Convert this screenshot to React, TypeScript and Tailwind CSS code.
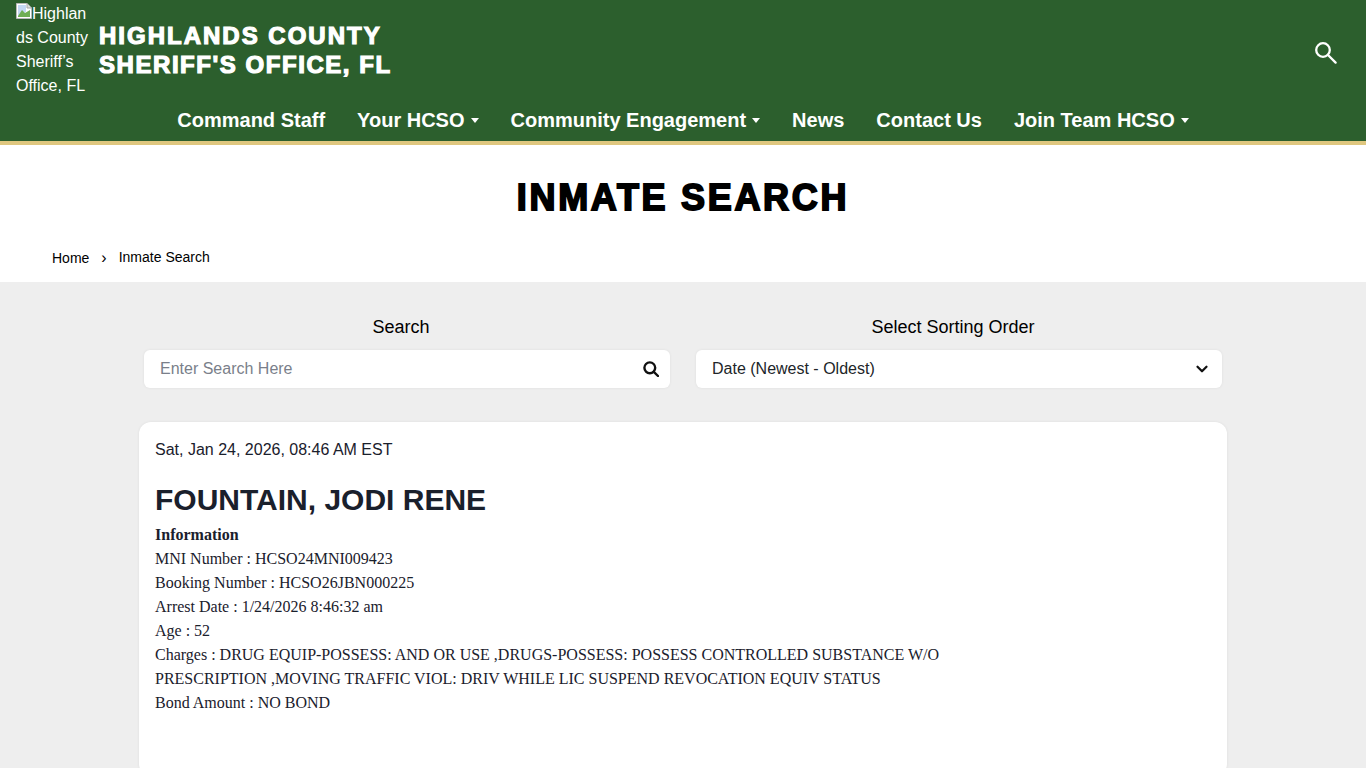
import { ChevronDown } from "lucide-react";

const sans = "font-['Liberation_Sans',Arial,sans-serif]";

const navItems = [
  { name: "Command Staff", caret: false },
  { name: "Your HCSO", caret: true },
  { name: "Community Engagement", caret: true },
  { name: "News", caret: false },
  { name: "Contact Us", caret: false },
  { name: "Join Team HCSO", caret: true },
];

const BrokenImage = () => (
  <svg width="16" height="16" viewBox="0 0 16 16" className="inline-block align-top mt-[1px]">
    <path d="M0.5 0.5H11L15.5 5V15.5H0.5Z" fill="#fff" stroke="#b8b8b8" />
    <path d="M11 0.5V5H15.5" fill="#ddd" stroke="#a8a8a8" />
    <path d="M2 2H10V9L2 13Z" fill="#c4d8f4" />
    <path d="M2 13L6 7L9 10L14 7V14H2Z" fill="#6fae54" />
  </svg>
);

// thin outline magnifier in the header
const HeaderSearch = () => (
  <svg width="22" height="22" viewBox="0 0 22 22" fill="none" stroke="#fff" strokeWidth="2.3" strokeLinecap="round">
    <circle cx="8" cy="8" r="6.8" />
    <path d="M13 13L20.6 20.6" />
  </svg>
);

// heavier magnifier in the search field
const FieldSearch = () => (
  <svg width="16" height="16" viewBox="0 0 16 16" fill="none" stroke="#111" strokeWidth="2.4" strokeLinecap="round">
    <circle cx="6.8" cy="6.8" r="5.4" />
    <path d="M10.8 10.8L15 15" />
  </svg>
);

const App = () => {
  return (
    <div className={`${sans} min-h-screen bg-[#eeeeee] text-black`}>
      <header className="h-[145px] border-b-4 border-[#dfc77f] bg-[#2c5f2d] text-white">
        <div className="flex h-[97px] pt-[2px] pr-[29px] pl-4">
          <div className="w-[75px] shrink-0 text-base leading-6">
            <BrokenImage />
            Highlan<wbr />ds County Sheriff’s Office, FL
          </div>
          <div className="ml-2 pt-[19px] text-2xl leading-[29px] font-bold [-webkit-text-stroke:1.2px_white]">
            <span className="block tracking-[2px]">HIGHLANDS COUNTY</span>
            <span className="block tracking-[1.55px]">SHERIFF'S OFFICE, FL</span>
          </div>
          <div className="ml-auto pt-[40px]">
            <HeaderSearch />
          </div>
        </div>
        <nav className="flex h-[44px] items-center justify-center gap-8 pt-[2px] text-xl font-bold">
          {navItems.map((item) => (
            <div key={item.name} className="flex items-center">
              <span>{item.name}</span>
              {item.caret && (
                <span className="ml-[6px] h-0 w-0 border-x-4 border-t-[5px] border-x-transparent border-t-white" />
              )}
            </div>
          ))}
        </nav>
      </header>

      <section className="h-[137px] bg-white">
        <h1 className="pt-[31px] text-center text-4xl leading-[44px] font-bold tracking-[2.7px] [-webkit-text-stroke:1.8px_black]">
          INMATE SEARCH
        </h1>
        <div className="mt-[27px] flex items-center pl-[52px] text-sm leading-5">
          <span className="pt-px">Home</span>
          <span className="mx-[12px] text-base leading-5">›</span>
          <span className="pb-px">Inmate Search</span>
        </div>
      </section>

      <main className="mx-auto w-[1088px] pt-[33px] pb-4">
        <div className="flex gap-[26px] px-[5px]">
          <div className="w-[526px]">
            <div className="pr-3 text-center text-lg leading-6">Search</div>
            <div className="mt-[11px] flex h-[38px] items-center justify-between rounded-md bg-white pr-[11px] pl-4 shadow-[0_0_3px_rgba(0,0,0,0.07)]">
              <span className="text-base text-[#7a7f8a]">Enter Search Here</span>
              <FieldSearch />
            </div>
          </div>
          <div className="w-[526px]">
            <div className="pr-3 text-center text-lg leading-6">Select Sorting Order</div>
            <div className="mt-[11px] flex h-[38px] items-center justify-between rounded-md bg-white pr-[11px] pl-4 shadow-[0_0_3px_rgba(0,0,0,0.07)]">
              <span className="text-base text-[#212529]">Date (Newest - Oldest)</span>
              <ChevronDown size={18} strokeWidth={3} color="#111" />
            </div>
          </div>
        </div>

        <article className="mt-[34px] h-[354px] rounded-xl bg-white px-4 pt-4 text-[#1a202c] shadow-[0_0_3px_rgba(0,0,0,0.07)]">
          <div className="text-base leading-6">Sat, Jan 24, 2026, 08:46 AM EST</div>
          <h2 className="mt-5 text-3xl leading-9 font-bold">FOUNTAIN, JODI RENE</h2>
          <div className="mt-[5px] w-[800px] font-['Liberation_Serif','Times_New_Roman',serif] text-base leading-6">
            <b>Information</b>
            <br />
            MNI Number : HCSO24MNI009423
            <br />
            Booking Number : HCSO26JBN000225
            <br />
            Arrest Date : 1/24/2026 8:46:32 am
            <br />
            Age : 52
            <br />
            Charges : DRUG EQUIP-POSSESS: AND OR USE ,DRUGS-POSSESS: POSSESS CONTROLLED SUBSTANCE W/O
            PRESCRIPTION ,MOVING TRAFFIC VIOL: DRIV WHILE LIC SUSPEND REVOCATION EQUIV STATUS
            <br />
            Bond Amount : NO BOND
          </div>
        </article>
      </main>
    </div>
  );
};

export default App;
